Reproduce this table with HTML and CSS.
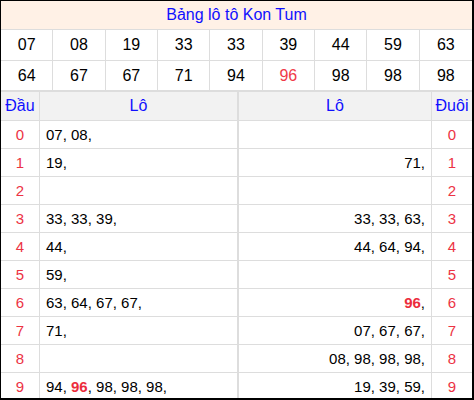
FILE: index.html
```html
<!DOCTYPE html>
<html lang="vi">
<head>
<meta charset="utf-8">
<title>Bảng lô tô Kon Tum</title>
<link rel="stylesheet" href="styles.css">
</head>
<body>
<div class="board">
  <div class="title">Bảng lô tô Kon Tum</div>
  <div class="nums">
    <div class="n">07</div><div class="n">08</div><div class="n">19</div><div class="n">33</div><div class="n">33</div><div class="n">39</div><div class="n">44</div><div class="n">59</div><div class="n">63</div>
    <div class="n">64</div><div class="n">67</div><div class="n">67</div><div class="n">71</div><div class="n">94</div><div class="n red">96</div><div class="n">98</div><div class="n">98</div><div class="n">98</div>
  </div>
  <div class="lo">
    <div class="h c1">Đầu</div><div class="h c2">Lô</div><div class="h c3">Lô</div><div class="h c4">Đuôi</div>

    <div class="d c1 dig">0</div><div class="d c2">07, 08,</div><div class="d c3"></div><div class="d c4 dig">0</div>
    <div class="d c1 dig">1</div><div class="d c2">19,</div><div class="d c3">71,</div><div class="d c4 dig">1</div>
    <div class="d c1 dig">2</div><div class="d c2"></div><div class="d c3"></div><div class="d c4 dig">2</div>
    <div class="d c1 dig">3</div><div class="d c2">33, 33, 39,</div><div class="d c3">33, 33, 63,</div><div class="d c4 dig">3</div>
    <div class="d c1 dig">4</div><div class="d c2">44,</div><div class="d c3">44, 64, 94,</div><div class="d c4 dig">4</div>
    <div class="d c1 dig">5</div><div class="d c2">59,</div><div class="d c3"></div><div class="d c4 dig">5</div>
    <div class="d c1 dig">6</div><div class="d c2">63, 64, 67, 67,</div><div class="d c3"><b class="hot">96</b>,</div><div class="d c4 dig">6</div>
    <div class="d c1 dig">7</div><div class="d c2">71,</div><div class="d c3">07, 67, 67,</div><div class="d c4 dig">7</div>
    <div class="d c1 dig">8</div><div class="d c2"></div><div class="d c3">08, 98, 98, 98,</div><div class="d c4 dig">8</div>
    <div class="d c1 dig">9</div><div class="d c2">94, <b class="hot">96</b>, 98, 98, 98,</div><div class="d c3">19, 39, 59,</div><div class="d c4 dig">9</div>
  </div>
</div>
</body>
</html>
```
FILE: styles.css
```css
html, body {
  margin: 0;
  padding: 0;
  background: #fff;
}
body {
  font-family: "Liberation Sans", Arial, sans-serif;
  color: #000;
}
.board {
  width: 474px;
  height: 400px;
  box-sizing: border-box;
  border-left: 1px solid #000;
  border-top: 1px solid #000;
  border-right: 2px solid #000;
  border-bottom: 2px solid #000;
  overflow: hidden;
}
.title {
  height: 28px;
  line-height: 28px;
  background: #fff1e6;
  border-bottom: 1px solid #dddddd;
  color: #1010ff;
  text-align: center;
  font-size: 16px;
}
.nums {
  display: grid;
  grid-template-columns: repeat(9, 1fr);
  grid-template-rows: 31px 30px;
  border-bottom: 1px solid #dddddd;
}
.n {
  border-right: 1px solid #dddddd;
  border-bottom: 1px solid #dddddd;
  display: flex;
  align-items: center;
  justify-content: center;
  font-size: 16px;
}
.n:nth-child(9n) {
  border-right: none;
}
.n.red {
  color: #f03a48;
}
.lo {
  display: grid;
  grid-template-columns: 39px 199px 193px 1fr;
  grid-template-rows: 29px repeat(10, 28px);
}
.h, .d {
  box-sizing: border-box;
  border-bottom: 1px solid #dddddd;
  white-space: nowrap;
}
.h {
  background: #f2f2f2;
  color: #1010ff;
  font-size: 16px;
  line-height: 28px;
  text-align: center;
}
.d {
  font-size: 15px;
  line-height: 27px;
}
.c1 {
  border-right: 1px solid #dddddd;
  text-align: center;
}
.c2 {
  border-right: 2px solid #dddddd;
  padding-left: 6px;
}
.c3 {
  border-right: 1px solid #dddddd;
  text-align: right;
  padding-right: 6px;
}
.h.c2, .h.c3 {
  text-align: center;
  padding: 0;
}
.c4 {
  text-align: center;
}
.dig {
  color: #ec3344;
}
.hot {
  color: #ec2c3c;
  font-weight: bold;
}
```
